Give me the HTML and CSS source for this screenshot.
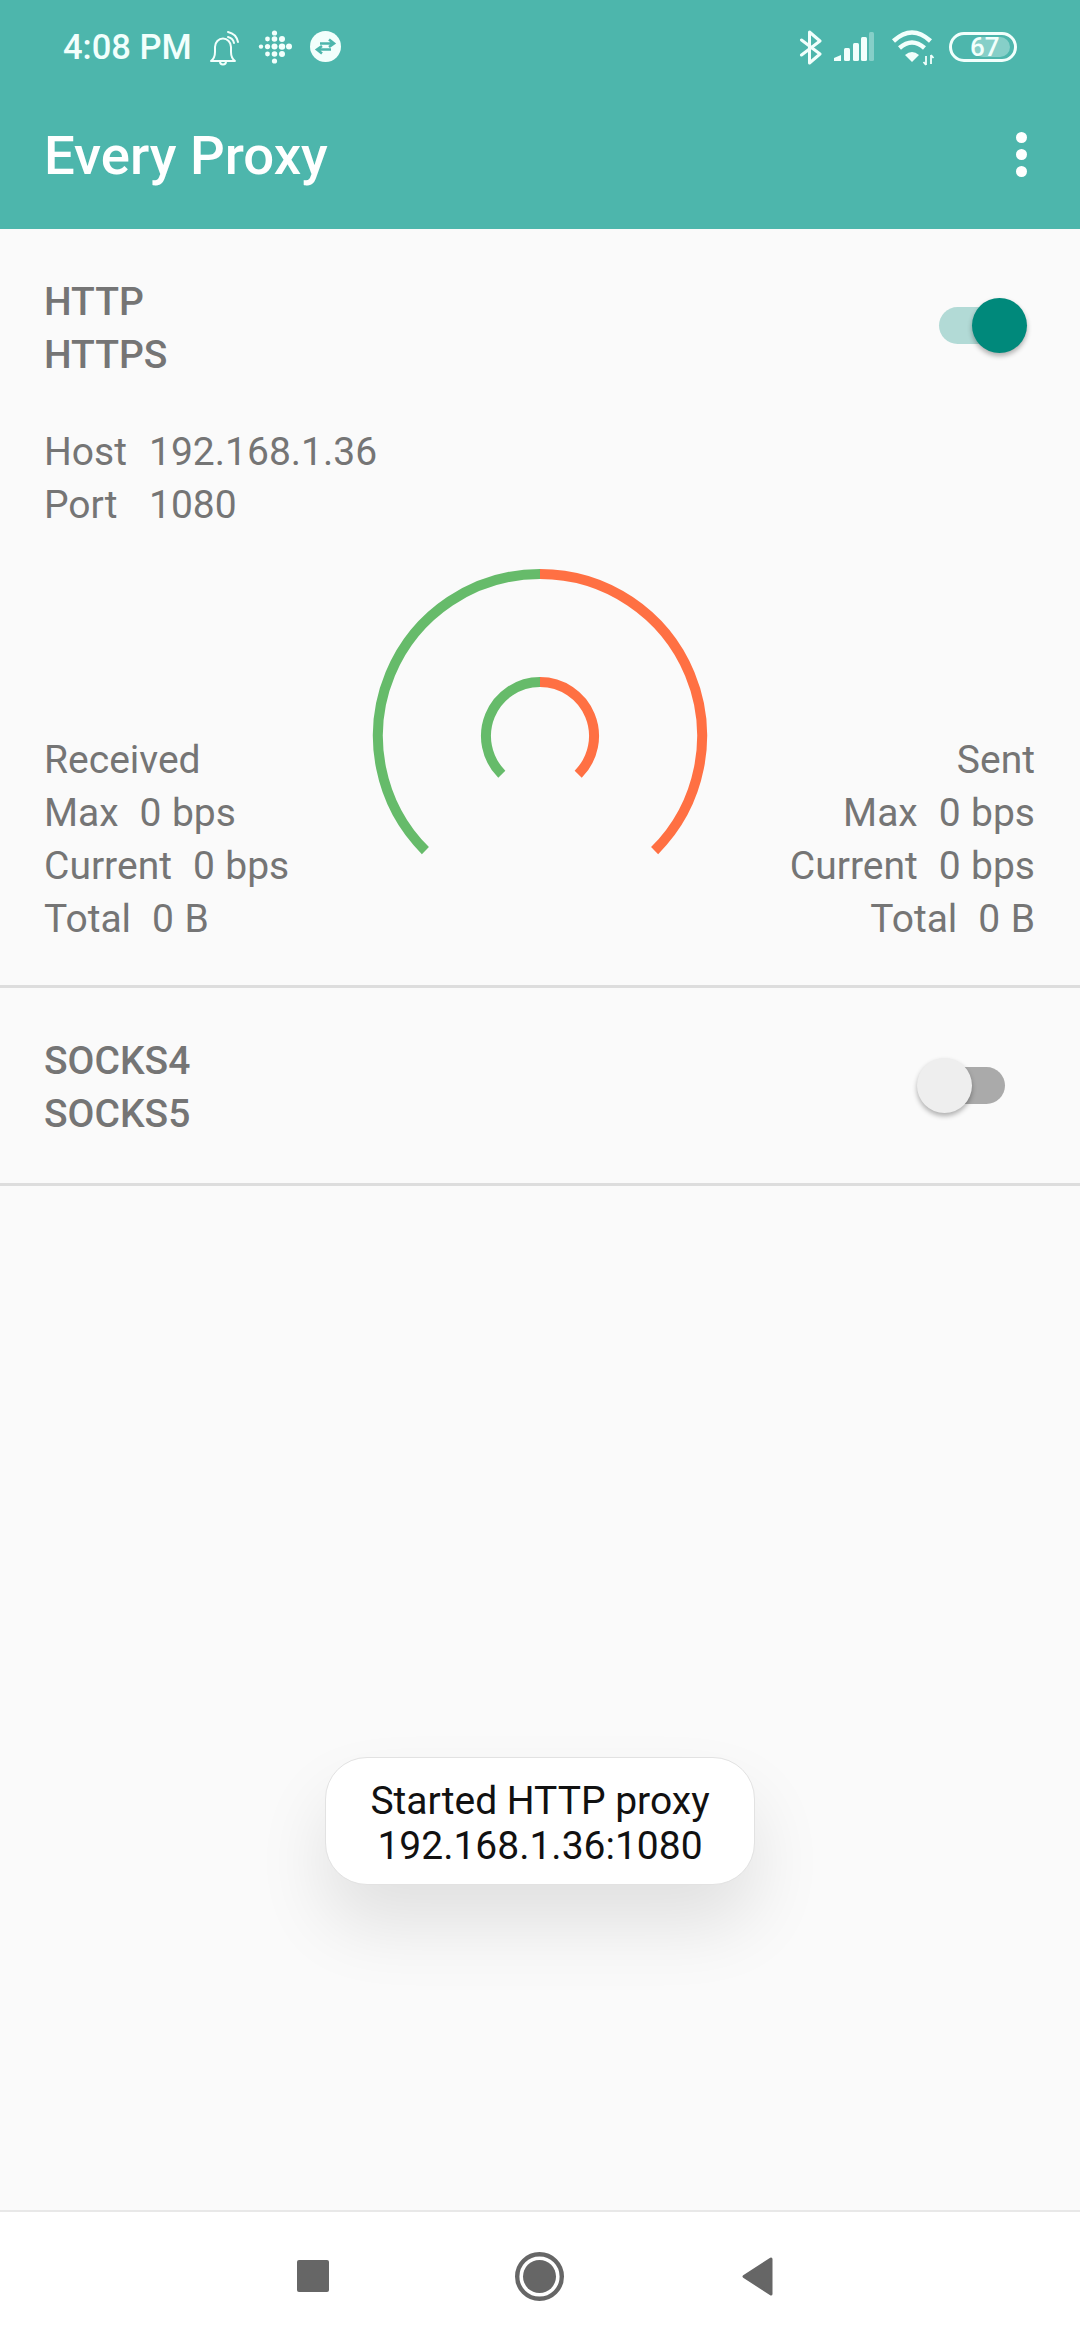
FILE: index.html
```html
<!DOCTYPE html>
<html lang="en">
<head>
    <meta charset="UTF-8">
    <meta name="viewport" content="width=device-width, initial-scale=1.0">
    <title>Every Proxy</title>
    <link rel="stylesheet" href="styles.css">
</head>
<body>
    <div class="screen">
        <!-- header -->
        <header class="header">
            <div class="status-bar">
                <div class="status-left">
                    <span class="time">4:08 PM</span>
                    <svg class="icon-bell" viewBox="0 0 31 38" fill="none" stroke="#f2fffc" stroke-width="2">
                        <path d="M2 33Q6 30 6 24V19A8 8.500 0 0 1 22 19V24Q22 30 26 33Z" stroke-linejoin="round"/>
                        <path d="M11 33.500a3 3 0 0 0 6 0"/>
                        <path d="M19 4A13 13 0 0 1 29 14M19 9A8 8 0 0 1 25 15" stroke-linecap="round"/>
                    </svg>
                    <svg class="icon-fitbit" viewBox="0 0 34 38" fill="#f2fffc">
                        <circle cx="3" cy="18.600" r="2.200"/>
                        <circle cx="9.500" cy="11" r="2.400"/>
                        <circle cx="9.500" cy="18.600" r="2.600"/>
                        <circle cx="9.500" cy="26" r="2.400"/>
                        <circle cx="16.500" cy="5" r="2.600"/>
                        <circle cx="16.500" cy="11" r="2.800"/>
                        <circle cx="16.500" cy="18.600" r="3"/>
                        <circle cx="16.500" cy="26" r="2.800"/>
                        <circle cx="16.500" cy="33" r="2.600"/>
                        <circle cx="24" cy="11" r="3"/>
                        <circle cx="24" cy="18.600" r="3.200"/>
                        <circle cx="24" cy="26" r="3"/>
                        <circle cx="31" cy="18.600" r="3"/>
                    </svg>
                    <svg class="icon-sync" viewBox="0 0 31 31">
                        <circle cx="15.500" cy="15.500" r="15.500" fill="#f2fffc"/>
                        <path d="M10 12.500H23M19 8.500L24 12.500L19 16" fill="none" stroke="#4db6ac" stroke-width="2.600"/>
                        <path d="M21 18.500H8M12 15L7 18.500L12 22.500" fill="none" stroke="#4db6ac" stroke-width="2.600"/>
                    </svg>
                </div>
                <div class="status-right">
                    <svg class="icon-bt" viewBox="0 0 24 36" fill="none" stroke="#f2fffc" stroke-width="3" stroke-linejoin="round" stroke-linecap="round">
                        <path d="M2.500 11L21 25L10.500 34V3L21 12L2.500 26"/>
                    </svg>
                    <svg class="icon-signal" viewBox="0 0 41 30" fill="#f2fffc">
                        <path d="M0 29V26L7 23V29Z"/>
                        <rect x="10" y="16" width="6" height="13" rx="1.500"/>
                        <rect x="19" y="11" width="6" height="18" rx="1.500"/>
                        <rect x="27" y="5" width="6" height="24" rx="1.500"/>
                        <rect x="35" y="0" width="5" height="29" rx="1.500" opacity="0.35"/>
                    </svg>
                    <svg class="icon-wifi" viewBox="0 0 46 36" fill="none" stroke="#f2fffc" stroke-width="4.500">
                        <path d="M3.500 11Q22 -6 40.500 11"/>
                        <path d="M9.500 18Q22 7 34.500 18"/>
                        <path d="M15 25Q22 19 29 25L22 32Z" fill="#f2fffc" stroke="none"/>
                        <path d="M36 26V35M33.500 32L36 35M41 25V34M41 25L43.500 28" stroke-width="1.800"/>
                    </svg>
                    <svg class="icon-battery" viewBox="0 0 68 30">
                        <rect x="24" y="5" width="37" height="20" rx="10" fill="#f2fffc" opacity="0.35"/>
                        <rect x="1.500" y="1.500" width="65" height="27" rx="13.500" fill="none" stroke="#f2fffc" stroke-width="3"/>
                        <text class="battery-text" x="21" y="24">67</text>
                    </svg>
                </div>
            </div>
            <div class="app-bar">
                <h1 class="app-title">Every Proxy</h1>
                <div class="menu-dots"><i></i><i></i><i></i></div>
            </div>
        </header>

        <!-- proxies -->
        <main class="content">
            <section class="proxy proxy-http">
                <div class="proxy-head">
                    <div class="proxy-name">HTTP<br>HTTPS</div>
                    <div class="switch switch-on"><span class="track"></span><span class="thumb"></span></div>
                </div>
                <div class="address">
                    <span>Host</span><span>192.168.1.36</span>
                    <span>Port</span><span>1080</span>
                </div>
                <div class="traffic">
                    <div class="stats">
                        <div>Received</div>
                        <div>Max  0 bps</div>
                        <div>Current  0 bps</div>
                        <div>Total  0 B</div>
                    </div>
                    <svg class="gauge" viewBox="0 0 340 300" fill="none" stroke-width="10">
                        <path d="M55.400 287.600A162 162 0 0 1 170 11" stroke="#66bb6a"/>
                        <path d="M170 11A162 162 0 0 1 284.600 287.600" stroke="#ff7043"/>
                        <path d="M131.800 211.200A54 54 0 0 1 170 119" stroke="#66bb6a"/>
                        <path d="M170 119A54 54 0 0 1 208.200 211.200" stroke="#ff7043"/>
                    </svg>
                    <div class="stats stats-right">
                        <div>Sent</div>
                        <div>Max  0 bps</div>
                        <div>Current  0 bps</div>
                        <div>Total  0 B</div>
                    </div>
                </div>
            </section>

            <section class="proxy proxy-socks">
                <div class="proxy-head">
                    <div class="proxy-name">SOCKS4<br>SOCKS5</div>
                    <div class="switch"><span class="track"></span><span class="thumb"></span></div>
                </div>
            </section>

            <div class="toast">Started HTTP proxy<br>192.168.1.36:1080</div>
        </main>

        <!-- navigation -->
        <nav class="nav-bar">
            <span class="nav-square"></span>
            <svg class="nav-home" viewBox="0 0 49 49">
                <circle cx="24.500" cy="24.500" r="22.300" fill="none" stroke="#666" stroke-width="4.400"/>
                <circle cx="24.500" cy="24.500" r="16.500" fill="#666"/>
            </svg>
            <svg class="nav-back" viewBox="0 0 31 39">
                <path d="M29 2V37L2 19.500Z" fill="#666" stroke="#666" stroke-width="3" stroke-linejoin="round"/>
            </svg>
        </nav>
    </div>
</body>
</html>
```

FILE: styles.css
```css
* {
    box-sizing: border-box;
}
body {
    margin: 0;
    background-color: #fafafa;
    font-family: Roboto, "Liberation Sans", sans-serif;
    overflow: hidden;
}
.screen {
    width: 1080px;
    height: 2340px;
    display: flex;
    flex-direction: column;
}

/* Header */
.header {
    height: 229px;
    background-color: #4db6ac;
    color: white;
}
.status-bar {
    height: 92px;
    padding: 28px 63px 0;
    display: flex;
    justify-content: space-between;
    align-items: flex-start;
}
.status-left, .status-right {
    display: flex;
    align-items: flex-start;
}
.time {
    width: 127px;
    margin-top: 1px;
    margin-right: 19px;
    font-size: 34.5px;
    font-weight: 500;
    line-height: 36px;
    white-space: nowrap;
    color: #f2fffc;
}
.icon-bell {
    width: 31px;
    height: 38px;
    margin-right: 18px;
}
.icon-fitbit {
    width: 34px;
    height: 38px;
    margin-right: 18px;
}
.icon-sync {
    width: 31px;
    height: 31px;
    margin-top: 3px;
}
.icon-bt {
    width: 24px;
    height: 36px;
    margin-top: 1px;
}
.icon-signal {
    width: 41px;
    height: 30px;
    margin: 4px 0 0 11px;
}
.icon-wifi {
    width: 46px;
    height: 36px;
    margin: 2px 0 0 15px;
}
.icon-battery {
    width: 68px;
    height: 30px;
    margin: 4px 0 0 13px;
}
.battery-text {
    fill: #f2fffc;
    font-size: 26px;
    font-weight: 500;
    font-family: Roboto, sans-serif;
}
.app-bar {
    height: 137px;
    padding: 0 53px 12px 44px;
    display: flex;
    justify-content: space-between;
    align-items: center;
}
.app-title {
    margin: 0;
    font-size: 54.5px;
    font-weight: 500;
}
.menu-dots {
    display: flex;
    flex-direction: column;
    gap: 6px;
}
.menu-dots i {
    width: 11px;
    height: 11px;
    border-radius: 50%;
    background-color: white;
}

/* Proxy sections */
.content {
    flex: 1;
    position: relative;
}
.proxy {
    padding: 47px 45px 0 44px;
    border-bottom: 3px solid #ddd;
    color: #757575;
    font-size: 39px;
    line-height: 53px;
}
.proxy-http {
    height: 759px;
}
.proxy-socks {
    height: 198px;
}
.proxy-head {
    display: flex;
    justify-content: space-between;
    align-items: flex-start;
}
.proxy-name {
    font-weight: 500;
}
.switch {
    position: relative;
    width: 110px;
    height: 55px;
    margin: 22px 8px 0 0;
}
.proxy-socks .switch {
    margin-top: 23px;
}
.track {
    position: absolute;
    top: 9px;
    left: 22px;
    width: 66px;
    height: 37px;
    border-radius: 19px;
    background-color: #aaa;
}
.thumb {
    position: absolute;
    top: 0;
    left: 0;
    width: 55px;
    height: 55px;
    border-radius: 50%;
    background-color: #eee;
    box-shadow: 0 3px 5px rgba(0, 0, 0, 0.3);
}
.switch-on .track {
    background-color: #b2dad6;
}
.switch-on .thumb {
    left: 55px;
    background-color: #00897b;
}
.address {
    margin-top: 44px;
    display: grid;
    grid-template-columns: 105px auto;
}
.traffic {
    display: flex;
    justify-content: space-between;
    align-items: flex-end;
    margin-top: 31px;
}
.stats {
    width: 300px;
    word-spacing: 0.8px;
}
.stats div {
    white-space: pre;
}
.stats-right {
    text-align: right;
}
.gauge {
    width: 340px;
    height: 300px;
    margin-bottom: 83px;
}

/* Toast */
.toast {
    position: absolute;
    top: 1528px;
    left: 325px;
    width: 430px;
    height: 128px;
    padding-top: 21px;
    border-radius: 42px;
    border: 1px solid #e2e2e2;
    background-color: white;
    box-shadow: 0 40px 70px rgba(0, 0, 0, 0.1);
    color: #111;
    font-size: 39px;
    line-height: 45px;
    text-align: center;
}

/* Navigation bar */
.nav-bar {
    height: 130px;
    padding-left: 297px;
    border-top: 2px solid #e8e8e8;
    background-color: white;
    display: flex;
    align-items: center;
}
.nav-square {
    width: 32px;
    height: 32px;
    margin-right: 186px;
    border-radius: 2px;
    background-color: #666;
}
.nav-home {
    width: 49px;
    height: 49px;
    margin-right: 178px;
}
.nav-back {
    width: 31px;
    height: 39px;
}
```
